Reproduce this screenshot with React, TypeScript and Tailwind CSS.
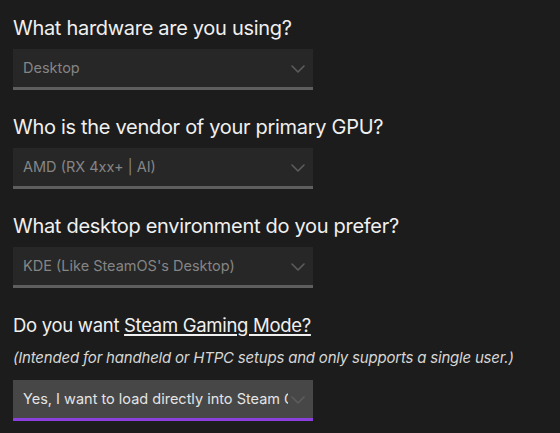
import { ChevronDown } from "lucide-react"

interface Question {
  title: React.ReactNode
  note?: string
  value: string
  active?: boolean
}

const questions: Question[] = [
  { title: "What hardware are you using?", value: "Desktop" },
  { title: "Who is the vendor of your primary GPU?", value: "AMD (RX 4xx+ | AI)" },
  { title: "What desktop environment do you prefer?", value: "KDE (Like SteamOS's Desktop)" },
  {
    title: (
      <>
        Do you want <span className="underline underline-offset-[2px] decoration-[1.5px]">Steam Gaming Mode?</span>
      </>
    ),
    note: "(Intended for handheld or HTPC setups and only supports a single user.)",
    value: "Yes, I want to load directly into Steam Gaming Mode",
    active: true,
  },
]

function FakeSelect({ value, active }: { value: string; active?: boolean }) {
  return (
    <div
      className={
        active
          ? "relative flex h-[41px] w-[300px] items-center border-b-[3px] border-[#8b3fdc] bg-[#474747] pl-[10px] pr-[25px]"
          : "relative flex h-[41px] w-[300px] items-center border-b-[3px] border-[#5e5e5e] bg-[#272727] pl-[10px] pr-[25px]"
      }
    >
      <span
        className={
          active
            ? "overflow-hidden whitespace-nowrap text-[14.5px] text-[#e4e4e4]"
            : "overflow-hidden whitespace-nowrap text-[14.5px] text-[#858585]"
        }
      >
        {value}
      </span>
      <ChevronDown
        className="absolute right-[3px] top-[8px] text-[#5c5c5c]"
        size={24}
        strokeWidth={1.6}
      />
    </div>
  )
}

export default function App() {
  return (
    <div
      className="min-h-[433px] w-[560px] bg-[#1c1c1c] pl-[13px] pt-[14px] text-[#f0f0f0]"
      style={{ fontFamily: "Inter, 'Noto Sans', sans-serif" }}
    >
      <div className="flex flex-col gap-[23px]">
        {questions.map((q, i) => (
          <div key={i} className="flex flex-col">
            <h2
              className={
                q.note
                  ? "text-[18.5px] leading-[28px] tracking-[-0.3px]"
                  : "text-[20px] leading-[28px] tracking-[-0.3px]"
              }
            >
              {q.title}
            </h2>
            {q.note && (
              <p className="mt-[8px] text-[15px] italic leading-[22px] text-[#d6d6d6] tracking-[-0.2px]">
                {q.note}
              </p>
            )}
            <div className={q.note ? "mt-[11px]" : "mt-[7px]"}>
              <FakeSelect value={q.value} active={q.active} />
            </div>
          </div>
        ))}
      </div>
    </div>
  )
}
